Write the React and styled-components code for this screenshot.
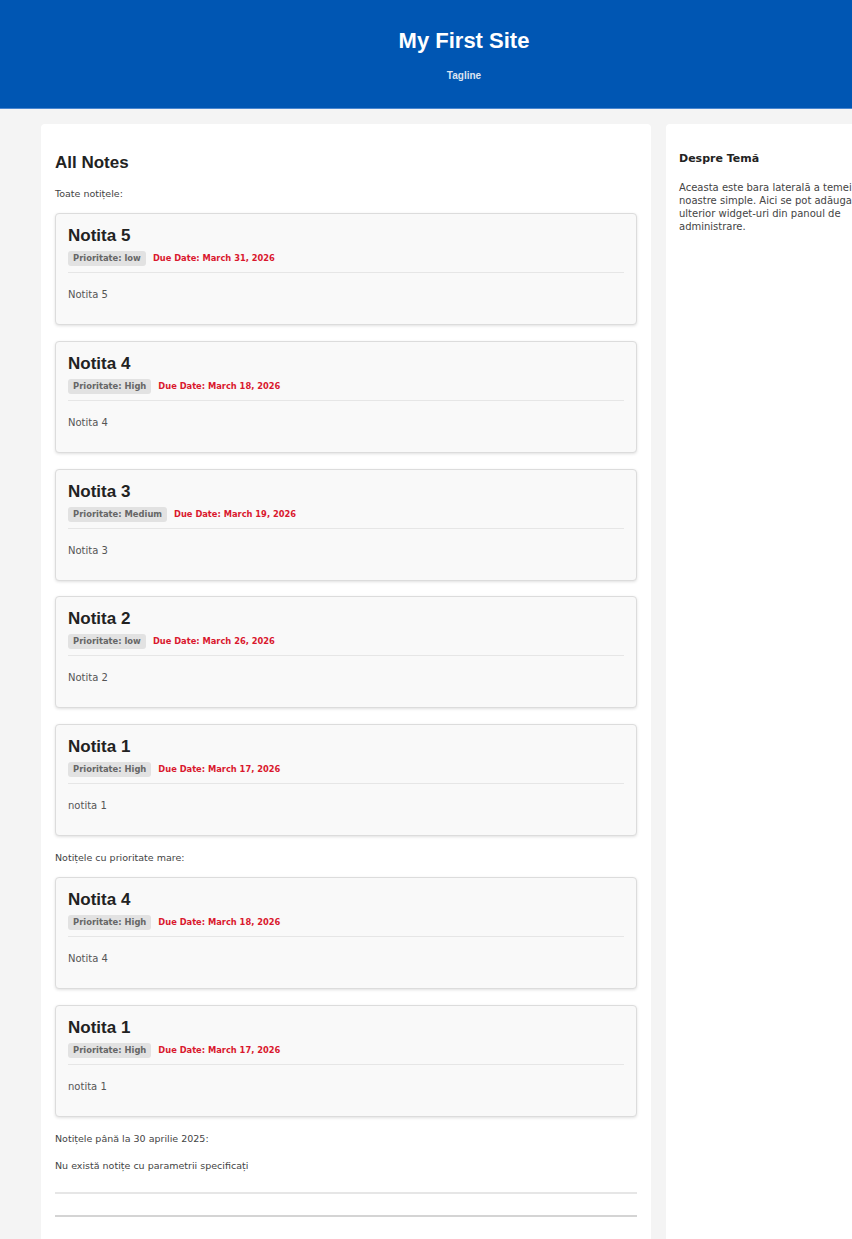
import React from "react";
import styled, { createGlobalStyle } from "styled-components";

const Global = createGlobalStyle`
  html, body { margin: 0; padding: 0; overflow-x: hidden; background: #f4f4f4; }
  body { font-family: "DejaVu Sans", sans-serif; color: #444; }
`;

const Page = styled.div`
  width: 928px;
  min-height: 1239px;
  background: #f4f4f4;
`;

const Header = styled.header`
  background: #0056b3;
  border-bottom: 1px solid #4a86cf;
  padding: 28px 0 26px;
  text-align: center;
  color: #fff;
`;

const SiteTitle = styled.h1`
  margin: 0;
  font-family: "Liberation Sans", Arial, sans-serif;
  font-size: 22px;
  line-height: 26px;
  font-weight: 700;
`;

const Tagline = styled.p`
  margin: 15px 0 0;
  font-family: "Liberation Sans", Arial, sans-serif;
  font-size: 10px;
  line-height: 13px;
  font-weight: 700;
  color: #dbe4f2;
`;

const Container = styled.div`
  display: flex;
  gap: 15px;
  padding: 15px 41px 0;
  align-items: stretch;
`;

const Main = styled.main`
  width: 610px;
  flex: 0 0 610px;
  background: #fff;
  border-radius: 4px 4px 0 0;
  padding: 28px 14px 40px;
  box-sizing: border-box;
  min-height: 1115px;
`;

const Sidebar = styled.aside`
  flex: 0 0 221px;
  background: #fff;
  border-radius: 4px 4px 0 0;
  padding: 28px 13px;
  box-sizing: border-box;
`;

const PageTitle = styled.h2`
  margin: 0;
  padding-top: 1px;
  font-family: "Liberation Sans", Arial, sans-serif;
  font-size: 17px;
  line-height: 19px;
  font-weight: 700;
  color: #222;
`;

const Label = styled.p`
  margin: ${(p) => p.$mt || 15}px 0 0;
  font-size: 9.5px;
  line-height: 14px;
  color: #444;
`;

const List = styled.div`
  margin-top: 12px;
  display: flex;
  flex-direction: column;
  gap: 15.75px;
`;

const Card = styled.article`
  background: #f9f9f9;
  border: 1px solid #dcdcdc;
  border-radius: 4px;
  box-shadow: 0 1px 3px rgba(0, 0, 0, 0.12);
  padding: 12px 12px 22px;
`;

const CardTitle = styled.h3`
  margin: 0;
  font-family: "Liberation Sans", Arial, sans-serif;
  font-size: 17px;
  line-height: 20px;
  font-weight: 700;
  color: #222;
`;

const Meta = styled.div`
  margin-top: 5px;
  display: flex;
  align-items: center;
  gap: 7px;
  height: 15px;
  padding-bottom: 6px;
  border-bottom: 1px solid #e6e6e6;
`;

const Badge = styled.span`
  background: #e2e2e2;
  color: #666;
  border-radius: 3px;
  padding: 2px 5px;
  font-size: 8.4px;
  line-height: 11px;
  font-weight: 700;
`;

const Due = styled.span`
  color: #d9182e;
  font-size: 8.3px;
  line-height: 11px;
  font-weight: 700;
`;

const CardBody = styled.p`
  margin: 15px 0 0;
  font-size: 10px;
  line-height: 14px;
  color: #555;
`;

const Rule = styled.div`
  height: 2px;
  background: ${(p) => p.$color};
  margin-top: ${(p) => p.$mt}px;
`;

const SideTitle = styled.h4`
  margin: 0;
  font-size: 11px;
  line-height: 14px;
  font-weight: 700;
  color: #222;
`;

const SideText = styled.p`
  margin: 14px 0 0;
  padding-top: 1px;
  font-size: 10px;
  line-height: 13px;
  color: #444;
`;

const notes = {
  5: { title: "Notita 5", prio: "low", due: "March 31, 2026", body: "Notita 5" },
  4: { title: "Notita 4", prio: "High", due: "March 18, 2026", body: "Notita 4" },
  3: { title: "Notita 3", prio: "Medium", due: "March 19, 2026", body: "Notita 3" },
  2: { title: "Notita 2", prio: "low", due: "March 26, 2026", body: "Notita 2" },
  1: { title: "Notita 1", prio: "High", due: "March 17, 2026", body: "notita 1" },
};

function Note({ n }) {
  return (
    <Card>
      <CardTitle>{n.title}</CardTitle>
      <Meta>
        <Badge>Prioritate: {n.prio}</Badge>
        <Due>Due Date: {n.due}</Due>
      </Meta>
      <CardBody>{n.body}</CardBody>
    </Card>
  );
}

export default function App() {
  return (
    <>
      <Global />
      <Page>
        <Header>
          <SiteTitle>My First Site</SiteTitle>
          <Tagline>Tagline</Tagline>
        </Header>
        <Container>
          <Main>
            <PageTitle>All Notes</PageTitle>
            <Label>Toate notițele:</Label>
            <List>
              {[5, 4, 3, 2, 1].map((k) => (
                <Note key={k} n={notes[k]} />
              ))}
            </List>
            <Label>Notițele cu prioritate mare:</Label>
            <List>
              {[4, 1].map((k) => (
                <Note key={k} n={notes[k]} />
              ))}
            </List>
            <Label>Notițele până la 30 aprilie 2025:</Label>
            <Label $mt={13}>Nu există notițe cu parametrii specificați</Label>
            <Rule $color="#e6e6e6" $mt={19} />
            <Rule $color="#d4d4d4" $mt={21} />
          </Main>
          <Sidebar>
            <SideTitle>Despre Temă</SideTitle>
            <SideText>
              Aceasta este bara laterală a temei noastre simple. Aici se pot adăuga ulterior widget-uri din panoul de administrare.
            </SideText>
          </Sidebar>
        </Container>
      </Page>
    </>
  );
}
